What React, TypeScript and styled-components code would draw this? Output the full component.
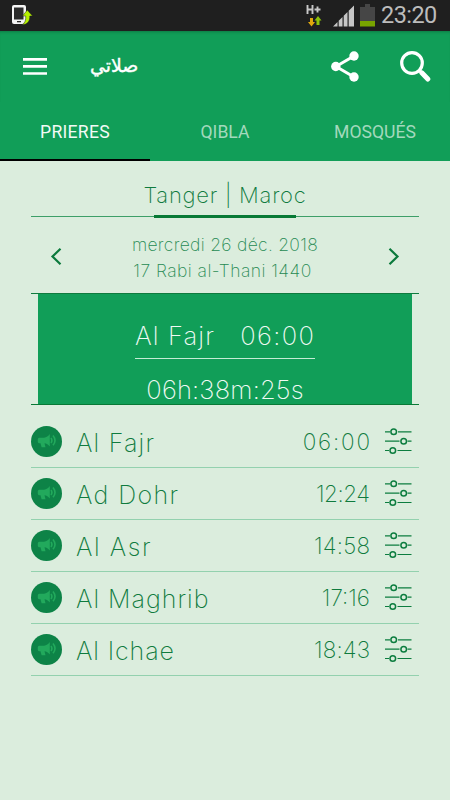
import React from 'react';
import styled, { createGlobalStyle } from 'styled-components';

const GlobalStyle = createGlobalStyle`
  * { box-sizing: border-box; }
  body { margin: 0; background: #dbeddd; }
  svg { display: block; flex: none; }
`;

const Screen = styled.div`
  width: 450px;
  height: 800px;
  overflow: hidden;
  background: #dbeddd;
  color: #0f7b3e;
  font-family: Inter, 'Liberation Sans', sans-serif;
  font-weight: 200;
`;

const StatusBar = styled.header`
  display: flex;
  align-items: center;
  height: 31px;
  padding: 0 13px 0 12px;
  background: #1f1f1f;
`;

const StatusIcons = styled.div`
  display: flex;
  align-items: center;
  margin-left: auto;
`;

const NetworkSlot = styled.div`
  margin-right: 9px;
`;

const BatterySlot = styled.div`
  margin-left: 6px;
`;

const Clock = styled.span`
  margin-left: 6px;
  width: 56px;
  color: #bcbcbc;
  font: 400 23.5px/31px Roboto, sans-serif;
  letter-spacing: -0.55px;
  white-space: nowrap;
`;

const AppBar = styled.div`
  display: flex;
  align-items: center;
  height: 71px;
  padding: 0 19px 0 23px;
  background: #119e58;
  box-shadow: inset 0 3px 3px -2px #0c7a43;
`;

const BarActions = styled.div`
  display: flex;
  align-items: center;
  gap: 41px;
`;

const IconButton = styled.button`
  display: flex;
  padding: 0;
  border: 0;
  background: none;
  color: inherit;
`;

const AppTitle = styled.h1`
  margin: 0 auto 3px 43px;
  color: #fff;
  font: 400 18.9px/30px 'DejaVu Sans', sans-serif;
  -webkit-text-stroke: 0.4px #fff;
`;

const Tabs = styled.nav`
  display: grid;
  grid-template-columns: repeat(3, 1fr);
  height: 59px;
  background: #119e58;
`;

const Tab = styled.a<{ $active?: boolean }>`
  display: flex;
  align-items: center;
  justify-content: center;
  padding-top: 3px;
  border-bottom: 2px solid ${p => (p.$active ? '#000' : 'transparent')};
  color: ${p => (p.$active ? '#f2faf5' : '#a3d9bd')};
  font: 400 17.6px/20px Roboto, sans-serif;
  letter-spacing: ${p => (p.$active ? 0.25 : 0)}px;
`;

const Main = styled.main`
  padding: 0 31px;
`;

const City = styled.h2`
  display: flex;
  flex-direction: column;
  align-items: center;
  height: 56px;
  margin: 0;
  padding-top: 20px;
  border-bottom: 1px solid #3d9f68;
  font-size: 22px;
  font-weight: 200;
  line-height: 28px;
  letter-spacing: 0.75px;

  &::after {
    content: '';
    width: 142px;
    height: 3px;
    margin-top: 6px;
    flex: none;
    background: #087a36;
  }
`;

const DateBar = styled.section`
  display: flex;
  align-items: center;
  justify-content: space-between;
  height: 77px;
  padding: 3px 19px 0;
  border-bottom: 1px solid #0f7b3e;
`;

const Dates = styled.div`
  display: flex;
  flex-direction: column;
  align-items: center;
  padding-top: 2px;
`;

const DateLine = styled.span<{ $spacing: number; $shift: number }>`
  margin-left: ${p => p.$shift}px;
  font-size: 17.5px;
  line-height: 26px;
  letter-spacing: ${p => p.$spacing}px;
  white-space: nowrap;
  color: #268a53;
`;

const NextFrame = styled.section`
  height: 111px;
  padding: 0 7px;
  border-bottom: 1px solid #087a36;
`;

const NextPanel = styled.div`
  display: flex;
  flex-direction: column;
  align-items: center;
  height: 110px;
  background: #119e58;
  color: #f0faf4;
`;

const NextPrayer = styled.div`
  display: flex;
  flex: none;
  justify-content: space-between;
  width: 180px;
  height: 65px;
  padding: 26px 1px 0 0;
  border-bottom: 1px solid #c5ecd5;
  font-size: 25.5px;
  line-height: 32px;
  white-space: nowrap;
`;

const Spaced = styled.span<{ $spacing: number }>`
  letter-spacing: ${p => p.$spacing}px;
  margin-right: ${p => -p.$spacing}px;
  white-space: nowrap;
`;

const Countdown = styled.div`
  flex: none;
  padding-top: 15px;
  font-size: 25.5px;
  line-height: 32px;
`;

const PrayerList = styled.ul`
  margin: 0;
  padding: 11px 0 0;
  list-style: none;
`;

const PrayerRow = styled.li`
  display: flex;
  align-items: center;
  height: 52px;
  padding: 0 7px 1px 0;
  border-bottom: 1px solid #93d1ae;
`;

const SoundButton = styled(IconButton)`
  align-items: center;
  justify-content: center;
  width: 31px;
  height: 31px;
  border-radius: 50%;
  background: #0d8347;
`;

const PrayerName = styled.span<{ $spacing: number }>`
  margin: 3px auto 0 14px;
  font-size: 25px;
  line-height: 32px;
  letter-spacing: ${p => p.$spacing}px;
`;

const PrayerTime = styled.time`
  margin: 2px 15px 0 0;
  font-size: 22.5px;
  line-height: 30px;
`;

const prayers = [
  { name: 'Al Fajr', nameSpacing: 1.2, time: '06:00', timeSpacing: 1.8 },
  { name: 'Ad Dohr', nameSpacing: 1.4, time: '12:24', timeSpacing: -0.5 },
  { name: 'Al Asr', nameSpacing: 1.6, time: '14:58', timeSpacing: 0.2 },
  { name: 'Al Maghrib', nameSpacing: 1, time: '17:16', timeSpacing: 0 },
  { name: 'Al Ichae', nameSpacing: 0.9, time: '18:43', timeSpacing: 0.1 },
];

const PhoneIcon = () => (
  <svg width="22" height="22" viewBox="0 0 22 22">
    <path d="M2 0h10a2 2 0 0 1 2 2v17H2a2 2 0 0 1-2-2V2a2 2 0 0 1 2-2Z" fill="#f4f4f4" />
    <path d="M2 2.500h9.500v12H2z" fill="#2b2b2b" />
    <path d="M5 16h4v1.300H5z" fill="#2b2b2b" />
    <path d="M15.300 5 20.500 11h-2.700c.2 5-2.300 8.500-7.800 8.700 3-1.500 4-4.500 3.700-8.700h-3.200Z" fill="#b4f000" stroke="#1f1f1f" strokeWidth=".5" />
  </svg>
);

const NetworkIcon = () => (
  <svg width="18" height="24" viewBox="0 0 18 24">
    <path d="M1.500 1v9M6.500 1v9M1.500 5.500h5M8.500 5.500h6M11.500 2.500v6" stroke="#c8c8c8" strokeWidth="1.900" fill="none" />
    <path d="M4 14h3v4h2l-3.500 4.500L2 18h2Z" fill="#e0a80c" />
    <path d="M10.500 21h3v-4.500h2L12 12l-3.500 4.500h2Z" fill="#8cc20a" />
  </svg>
);

const SignalIcon = () => (
  <svg width="21" height="22" viewBox="0 0 21 22">
    <path d="M0 21.500 4.500 17v4.500ZM5.700 15.800 9.500 12v9.500H5.700ZM10.700 10.800l3.800-3.800v14.500h-3.800ZM15.700 5.700 21 .5v21h-5.300Z" fill="#c6c6c6" />
  </svg>
);

const BatteryIcon = () => (
  <svg width="15" height="23" viewBox="0 0 15 23">
    <path d="M5 0h5v3h5v14H0V3h5z" fill="#464646" />
    <path d="M0 17h15v5.500H0z" fill="#78a400" />
  </svg>
);

const MenuIcon = () => (
  <svg width="24" height="18" viewBox="0 0 24 18">
    <path d="M0 1.400h24M0 8.400h24M0 15.500h24" stroke="#fff" strokeWidth="2.700" />
  </svg>
);

const ShareIcon = () => (
  <svg width="28" height="31" viewBox="0 0 28 31">
    <path d="M23 5 5 15.500 23 26" stroke="#fff" strokeWidth="3" fill="none" />
    <circle cx="23" cy="5" r="4.700" fill="#fff" />
    <circle cx="4.800" cy="15.500" r="4.700" fill="#fff" />
    <circle cx="23" cy="26" r="4.700" fill="#fff" />
  </svg>
);

const SearchIcon = () => (
  <svg width="31" height="31" viewBox="0 0 31 31">
    <circle cx="12" cy="12" r="10.300" stroke="#fff" strokeWidth="3.200" fill="none" />
    <path d="m19.500 19.500 2 2" stroke="#fff" strokeWidth="3" />
    <path d="m21.800 21.800 6 6.200" stroke="#fff" strokeWidth="5" strokeLinecap="round" />
  </svg>
);

const Chevron = ({ flip }: { flip?: boolean }) => (
  <svg width="12" height="19" viewBox="0 0 12 19">
    <path d={flip ? 'm1.500 1.700 8 7.800-8 7.800' : 'm10.500 1.700-8 7.800 8 7.800'} stroke="#0b7a3c" strokeWidth="2.200" fill="none" />
  </svg>
);

const MegaphoneIcon = () => (
  <svg width="20" height="16" viewBox="0 0 20 16">
    <path d="M2 4.800h5C9.500 4.500 11.300 3 12.800 1v12.500c-1.500-2-3.300-3-5.300-3.200l1 4H4.600L3.500 10.300H2a1.500 1.500 0 0 1-1.200-1.200V6A1.500 1.500 0 0 1 2 4.800Z" fill="#22a95c" />
    <path d="M14 5q1.800 2.500 0 5M16 2.500q4 4.900 0 9.800" stroke="#22a95c" strokeWidth="1.600" fill="none" />
  </svg>
);

const SlidersIcon = () => (
  <svg width="27" height="28" viewBox="0 0 27 28" fill="none" stroke="#0c7d3f" strokeWidth="1.200">
    <path d="M0 4.800h5M13 4.800h13.500M0 14.200h14.500M22.500 14.200h4M0 23.500h4M12.500 23.500h14" />
    <g strokeWidth="1.500">
      <circle cx="8.700" cy="4.800" r="2.800" />
      <circle cx="18.700" cy="14.200" r="2.800" />
      <circle cx="7.800" cy="23.500" r="2.800" />
    </g>
  </svg>
);

export default function App() {
  return (
    <Screen>
      <GlobalStyle />
      <StatusBar>
        <PhoneIcon />
        <StatusIcons>
          <NetworkSlot><NetworkIcon /></NetworkSlot>
          <SignalIcon />
          <BatterySlot><BatteryIcon /></BatterySlot>
          <Clock>23:20</Clock>
        </StatusIcons>
      </StatusBar>
      <AppBar>
        <IconButton aria-label="Menu"><MenuIcon /></IconButton>
        <AppTitle dir="rtl">صلاتي</AppTitle>
        <BarActions>
          <IconButton aria-label="Partager"><ShareIcon /></IconButton>
          <IconButton aria-label="Rechercher"><SearchIcon /></IconButton>
        </BarActions>
      </AppBar>
      <Tabs>
        <Tab $active>PRIERES</Tab>
        <Tab>QIBLA</Tab>
        <Tab>MOSQUÉS</Tab>
      </Tabs>
      <Main>
        <City>Tanger | Maroc</City>
        <DateBar>
          <IconButton aria-label="Jour précédent"><Chevron /></IconButton>
          <Dates>
            <DateLine $spacing={0.3} $shift={0}>mercredi 26 déc. 2018</DateLine>
            <DateLine $spacing={0.45} $shift={-5}>17 Rabi al-Thani 1440</DateLine>
          </Dates>
          <IconButton aria-label="Jour suivant"><Chevron flip /></IconButton>
        </DateBar>
        <NextFrame>
          <NextPanel>
            <NextPrayer>
              <Spaced $spacing={1.1}>Al Fajr</Spaced>
              <Spaced $spacing={1.4}>06:00</Spaced>
            </NextPrayer>
            <Countdown><Spaced $spacing={0.2}>06h:38m:25s</Spaced></Countdown>
          </NextPanel>
        </NextFrame>
        <PrayerList>
          {prayers.map(p => (
            <PrayerRow key={p.name}>
              <SoundButton aria-label="Adhan"><MegaphoneIcon /></SoundButton>
              <PrayerName $spacing={p.nameSpacing}>{p.name}</PrayerName>
              <PrayerTime><Spaced $spacing={p.timeSpacing}>{p.time}</Spaced></PrayerTime>
              <IconButton aria-label="Réglages"><SlidersIcon /></IconButton>
            </PrayerRow>
          ))}
        </PrayerList>
      </Main>
    </Screen>
  );
}
